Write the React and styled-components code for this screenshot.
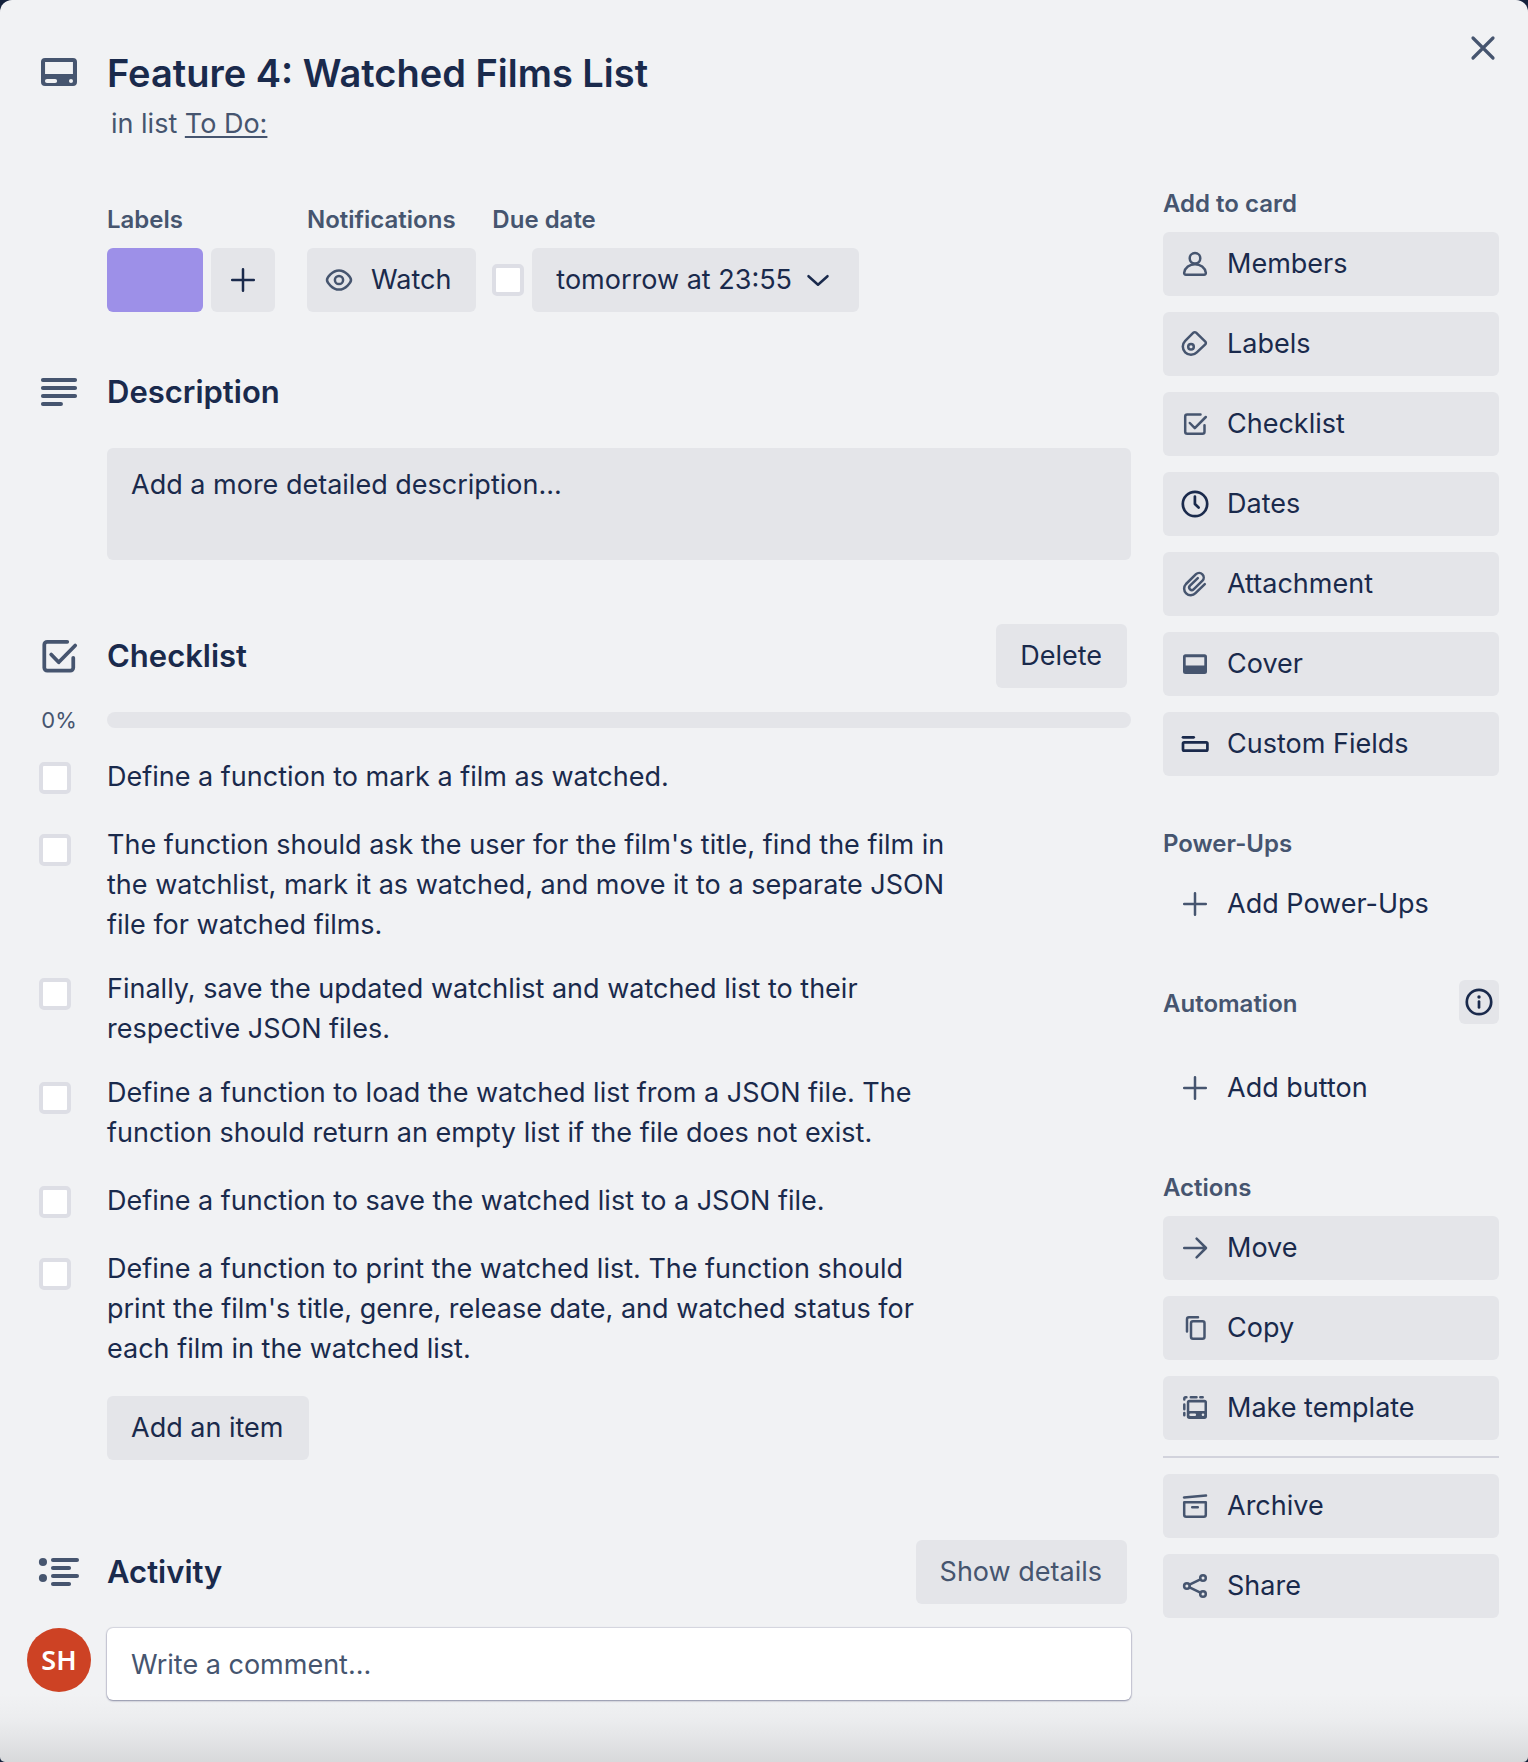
import React from "react";
import styled, { createGlobalStyle } from "styled-components";

const color = {
  text: "#1a2a4c",
  subtle: "#46556f",
  surface: "#f1f2f4",
  button: "#e4e5e9",
  line: "#d2d3dc",
  box: "#dddee5",
};

const GlobalStyle = createGlobalStyle`
  *, *::before, *::after { box-sizing: border-box; }
  body {
    margin: 0;
    background: #14213c;
    color: ${color.text};
    font: 400 27px/40px Inter, "Liberation Sans", sans-serif;
  }
  h1, h2, h3, p, ul { margin: 0; padding: 0; }
  button, input, textarea { font: inherit; color: inherit; }
`;

const Dialog = styled.main`
  min-height: 100vh;
  border-radius: 12px 12px 5px 5px;
  background: linear-gradient(to top, #d8d9db 0, #e3e4e6 22px, #ecedef 44px, ${color.surface} 68px);
`;

const Header = styled.header`
  display: flex;
  align-items: flex-start;
  padding: 28px 25px 0 27px;
`;

const Gutter = styled.div`
  display: flex;
  flex: none;
  justify-content: center;
  width: 64px;
  margin-right: 16px;
  color: ${color.subtle};
`;

const HeaderMain = styled.div`
  display: flex;
  flex: 1;
  padding-top: 20px;
`;

const Title = styled.h1`
  font-size: 38px;
  line-height: 50px;
  font-weight: 600;
`;

const Location = styled.p`
  padding: 6px 4px 0;
  color: ${color.subtle};
`;

const ListLink = styled.a`
  color: inherit;
  text-decoration: underline;
  text-decoration-thickness: 2px;
  text-underline-offset: 3px;
`;

const Close = styled.button`
  display: grid;
  place-items: center;
  width: 40px;
  height: 40px;
  padding: 0;
  border: 0;
  background: none;
  color: ${color.subtle};
  cursor: pointer;
`;

const Body = styled.div`
  display: grid;
  grid-template-columns: minmax(0, 1fr) 336px;
  gap: 32px;
  padding: 46px 29px 62px 27px;
`;

const Details = styled.div`
  display: flex;
  padding: 16px 0 0 80px;
`;

const Detail = styled.div`
  margin-right: ${(p) => p.$gap || 0}px;
`;

const SmallHeading = styled.h3`
  margin-bottom: 14px;
  color: ${color.subtle};
  font-size: 24px;
  line-height: 28px;
  font-weight: 600;
`;

const Row = styled.div`
  display: flex;
  align-items: center;
  gap: 8px;
`;

const Button = styled.button`
  display: flex;
  align-items: center;
  gap: ${(p) => p.$gap || 16}px;
  width: ${(p) => (p.$wide ? "100%" : "auto")};
  height: 64px;
  padding: 0 25px 0 ${(p) => (p.$icon ? 16 : 24)}px;
  border: 0;
  border-radius: 6px;
  background: ${(p) => (p.$plain ? "transparent" : color.button)};
  color: ${(p) => (p.$subtle ? color.subtle : color.text)};
  white-space: nowrap;
  cursor: pointer;
  svg { color: ${(p) => (p.$iconSubtle ? color.subtle : "inherit")}; }
`;

const Swatch = styled.button`
  width: 96px;
  height: 64px;
  border: 0;
  border-radius: 6px;
  background: #9d90e8;
  cursor: pointer;
`;

const Square = styled(Button)`
  justify-content: center;
  width: 64px;
  padding: 0;
`;

const Checkbox = styled.input`
  appearance: none;
  flex: none;
  width: 32px;
  height: 32px;
  margin: 0;
  border: 4px solid ${color.box};
  border-radius: 5px;
  background: #fff;
  &:checked { background: #0c66e4; }
`;

const SectionHead = styled.div`
  display: flex;
  align-items: center;
  height: 64px;
  margin-top: ${(p) => p.$top}px;
  padding-right: 4px;
`;

const SectionTitle = styled.h2`
  flex: 1;
  font-size: 31px;
  line-height: 40px;
  font-weight: 600;
`;

const Description = styled.textarea`
  display: block;
  width: calc(100% - 80px);
  height: 112px;
  margin: 24px 0 0 80px;
  padding: 17px 24px;
  border: 0;
  border-radius: 6px;
  background: ${color.button};
  resize: none;
  &::placeholder { color: ${color.text}; opacity: 1; }
`;

const Progress = styled.div`
  display: flex;
  align-items: center;
  height: 32px;
  margin: 16px 0 4px;
`;

const Percent = styled.span`
  font-size: 22px;
  line-height: 32px;
`;

const Track = styled.div`
  flex: 1;
  height: 16px;
  border-radius: 8px;
  background: ${color.button};
`;

const Items = styled.ul`
  list-style: none;
`;

const Item = styled.li`
  display: flex;
  min-height: 72px;
  padding: 0 176px 0 12px;
  ${Checkbox} { margin: 22px 36px 0 0; }
`;

const ItemText = styled.label`
  align-self: center;
  padding: 13px 0 11px;
`;

const AddItem = styled(Button)`
  margin: 16px 0 0 80px;
`;

const CommentRow = styled.form`
  display: flex;
  align-items: flex-start;
  margin-top: 24px;
`;

const Avatar = styled.div`
  flex: none;
  width: 64px;
  height: 64px;
  margin-right: 16px;
  border-radius: 50%;
  background: #cd4224;
  color: #fff;
  font: 600 27px/64px "Noto Sans", sans-serif;
  text-align: center;
`;

const Comment = styled.input`
  flex: 1;
  min-width: 0;
  height: 72px;
  padding: 0 24px;
  border: 0;
  border-radius: 6px;
  background: #fff;
  box-shadow: 0 1px 2px rgba(30, 34, 80, 0.4), 0 0 1px 1px rgba(30, 34, 80, 0.12);
  &::placeholder { color: ${color.subtle}; opacity: 1; }
`;

const Sidebar = styled.aside`
  display: flex;
  flex-direction: column;
`;

const Group = styled.section`
  margin-top: ${(p) => p.$top || 0}px;
`;

const Stack = styled.div`
  display: flex;
  flex-direction: column;
  gap: 16px;
`;

const AutomationHead = styled.div`
  display: flex;
  align-items: flex-start;
  justify-content: space-between;
  height: 44px;
  margin-bottom: 32px;
  ${SmallHeading} { padding-top: 10px; }
`;

const InfoButton = styled(Button)`
  justify-content: center;
  width: 40px;
  height: 44px;
  padding: 0;
`;

const Divider = styled.hr`
  width: 100%;
  height: 2px;
  margin: 0;
  border: 0;
  background: ${color.line};
`;

const Svg = styled.svg`
  flex: none;
  width: ${(p) => p.$size}px;
  height: ${(p) => p.$size}px;
  fill: none;
  stroke: currentColor;
  stroke-width: 2.5;
  stroke-linecap: round;
  stroke-linejoin: round;
`;

const solid = { fill: "currentColor", stroke: "none", fillRule: "evenodd" };

const shapes = {
  card: (
    <path {...solid} d="M6.7 6.7h18.6A2.7 2.7 0 0 1 28 9.4v13.2a2.7 2.7 0 0 1-2.7 2.7H6.7A2.7 2.7 0 0 1 4 22.6V9.4a2.7 2.7 0 0 1 2.7-2.7zM6.7 9.4v8h18.6v-8zM8 20.6a1.3 1.3 0 0 0 0 2.7h5.4a1.3 1.3 0 0 0 0-2.7zM24 20.6a1.3 1.3 0 1 0 0 2.7 1.3 1.3 0 0 0 0-2.7z" />
  ),
  close: <path strokeWidth="3.2" d="M6 6l20 20M26 6L6 26" />,
  plus: <path d="M16 5.2v21.6M5.2 16h21.6" />,
  eye: (
    <>
      <path d="M4 16c0-2 5-9.600 12-9.600S28 14 28 16s-5 9.600-12 9.600S4 18 4 16z" />
      <circle cx="16" cy="16" r="4.1" />
    </>
  ),
  chevron: <path strokeWidth="2.5" d="M6.500 12.200L16 20.700 25.500 12.200" />,
  lines: <path strokeWidth="2.7" d="M5.300 8h21.400M5.300 13.300h21.400M5.300 18.700h21.400M5.300 24h12" />,
  checklist: (
    <path d="M21.500 6.500H8.200a2 2 0 0 0-2 2v15.300a2 2 0 0 0 2 2h15.300a2 2 0 0 0 2-2V17.200M10.800 15l5 5.200L26.800 9" />
  ),
  activity: (
    <>
      <path strokeWidth="2.7" d="M12 8h16M12 13.300h10.700M12 18.700h16M12 24h10.700" />
      <circle {...solid} cx="5.300" cy="9.300" r="2.700" />
      <circle {...solid} cx="5.300" cy="20" r="2.700" />
    </>
  ),
  member: (
    <>
      <circle cx="16" cy="10.300" r="5.300" />
      <path d="M7 26.800h18a1.800 1.800 0 0 0 1.800-2.200C26 19.800 21.500 16.200 16 16.200S6 19.800 5.200 24.600A1.800 1.800 0 0 0 7 26.800z" />
    </>
  ),
  label: (
    <>
      <path d="M6.200 12.800L14.400 4.700a1.900 1.900 0 0 1 2.700 0L26.300 13.600a1.900 1.900 0 0 1 0 2.700L17.800 24.400A8.200 8.200 0 0 1 6.200 12.800z" />
      <circle cx="12" cy="18.700" r="2.800" />
    </>
  ),
  clock: (
    <>
      <circle cx="16" cy="16" r="12.200" strokeWidth="2.700" />
      <path strokeWidth="2.700" d="M15.900 8.500V16l3.700 3.500" />
    </>
  ),
  clip: (
    <path d="M25.800 16.200l-9.300 9A6.600 6.600 0 0 1 7 16L17 6.200a4.600 4.600 0 0 1 6.500 6.500L14.600 21.300a2.500 2.500 0 0 1-3.600-3.600L18.800 10.200" />
  ),
  cover: (
    <path {...solid} d="M6.500 6.300h19A2.500 2.500 0 0 1 28 8.800v14.700a2.500 2.500 0 0 1-2.500 2.500h-19A2.500 2.500 0 0 1 4 23.500V8.800a2.500 2.500 0 0 1 2.500-2.500zM6.700 9.300v8.200h18.600V9.300z" />
  ),
  fields: (
    <>
      <path strokeWidth="2.700" d="M4 9.300h10.700" />
      <rect strokeWidth="2.700" x="4" y="14.400" width="24.400" height="8.300" rx="1.200" />
    </>
  ),
  info: (
    <>
      <circle cx="16" cy="16" r="12.200" strokeWidth="2.700" />
      <circle {...solid} cx="16" cy="11" r="1.700" />
      <path strokeWidth="2.700" d="M16 15.500v6" />
    </>
  ),
  arrow: <path d="M5.200 16h21.400M17.600 6.600L27 16l-9.400 9.400" />,
  copy: (
    <>
      <path d="M19 5.200H10a2 2 0 0 0-2 2V19.500" />
      <rect x="12" y="9.300" width="13.500" height="17.400" rx="2" />
    </>
  ),
  template: (
    <>
      <path d="M5.300 7.400V6.700a1.400 1.400 0 0 1 1.400-1.400h.7M11.800 5.300h5.700M21.300 5.300h2.400M5.300 12.500v4.700M5.300 21v2.200" />
      <path {...solid} d="M10.400 7.700h15A2.600 2.600 0 0 1 28 10.300v14a2.600 2.600 0 0 1-2.600 2.600h-15a2.600 2.600 0 0 1-2.600-2.600v-14a2.600 2.600 0 0 1 2.600-2.600zM10.300 10.400v8.600h15.200v-8.600zM11.600 21.500a1.300 1.300 0 0 0 0 2.600h4.200a1.300 1.300 0 0 0 0-2.600zM24 21.500a1.300 1.300 0 1 0 0 2.600 1.300 1.300 0 0 0 0-2.600z" />
    </>
  ),
  archive: (
    <path d="M5 7.400L27 5.500M5.200 12.300h21.600v12.500a2 2 0 0 1-2 2H7.200a2 2 0 0 1-2-2zM13.200 17.300h5.600" />
  ),
  share: (
    <>
      <circle cx="7.900" cy="16" r="2.800" />
      <circle cx="24" cy="8" r="2.800" />
      <circle cx="24" cy="24" r="2.800" />
      <path d="M10.500 14.700l10.900-5.400M10.500 17.300l10.900 5.400" />
    </>
  ),
};

const Icon = ({ name, size = 32 }) => (
  <Svg viewBox="0 0 32 32" $size={size} aria-hidden="true">
    {shapes[name]}
  </Svg>
);

const items = [
  "Define a function to mark a film as watched.",
  "The function should ask the user for the film's title, find the film in the watchlist, mark it as watched, and move it to a separate JSON file for watched films.",
  "Finally, save the updated watchlist and watched list to their respective JSON files.",
  "Define a function to load the watched list from a JSON file. The function should return an empty list if the file does not exist.",
  "Define a function to save the watched list to a JSON file.",
  "Define a function to print the watched list. The function should print the film's title, genre, release date, and watched status for each film in the watched list.",
];

const addActions = [
  ["member", "Members"],
  ["label", "Labels"],
  ["checklist", "Checklist"],
  ["clock", "Dates", true],
  ["clip", "Attachment"],
  ["cover", "Cover"],
  ["fields", "Custom Fields", true],
];

const cardActions = [
  ["arrow", "Move"],
  ["copy", "Copy"],
  ["template", "Make template"],
];

const endActions = [
  ["archive", "Archive"],
  ["share", "Share"],
];

const SideButton = ({ icon, label, dark, plain }) => (
  <Button type="button" $wide $icon $iconSubtle={!dark} $plain={plain}>
    <Icon name={icon} />
    {label}
  </Button>
);

export default function App() {
  return (
    <>
      <GlobalStyle />
      <Dialog>
        <Header>
          <HeaderMain>
            <Gutter>
              <Icon name="card" size={48} />
            </Gutter>
            <div>
              <Title>Feature 4: Watched Films List</Title>
              <Location>
                in list <ListLink href="#list">To Do:</ListLink>
              </Location>
            </div>
          </HeaderMain>
          <Close type="button" aria-label="Close">
            <Icon name="close" />
          </Close>
        </Header>

        <Body>
          <div>
            <Details>
              <Detail $gap={32}>
                <SmallHeading>Labels</SmallHeading>
                <Row>
                  <Swatch type="button" aria-label="Purple label" />
                  <Square type="button" aria-label="Add label">
                    <Icon name="plus" />
                  </Square>
                </Row>
              </Detail>
              <Detail $gap={16}>
                <SmallHeading>Notifications</SmallHeading>
                <Button type="button" $icon $iconSubtle>
                  <Icon name="eye" />
                  Watch
                </Button>
              </Detail>
              <Detail>
                <SmallHeading>Due date</SmallHeading>
                <Row>
                  <Checkbox type="checkbox" aria-label="Mark due date complete" />
                  <Button type="button" $gap={10}>
                    tomorrow at 23:55
                    <Icon name="chevron" />
                  </Button>
                </Row>
              </Detail>
            </Details>

            <SectionHead $top={48}>
              <Gutter>
                <Icon name="lines" size={48} />
              </Gutter>
              <SectionTitle>Description</SectionTitle>
            </SectionHead>
            <Description aria-label="Description" placeholder="Add a more detailed description..." />

            <SectionHead $top={64}>
              <Gutter>
                <Icon name="checklist" size={48} />
              </Gutter>
              <SectionTitle>Checklist</SectionTitle>
              <Button type="button">Delete</Button>
            </SectionHead>
            <Progress>
              <Gutter>
                <Percent>0%</Percent>
              </Gutter>
              <Track role="progressbar" aria-label="Checklist progress" aria-valuenow={0} />
            </Progress>
            <Items>
              {items.map((text, i) => (
                <Item key={text}>
                  <Checkbox type="checkbox" id={`item-${i}`} />
                  <ItemText htmlFor={`item-${i}`}>{text}</ItemText>
                </Item>
              ))}
            </Items>
            <AddItem type="button">Add an item</AddItem>

            <SectionHead $top={80}>
              <Gutter>
                <Icon name="activity" size={48} />
              </Gutter>
              <SectionTitle>Activity</SectionTitle>
              <Button type="button" $subtle>
                Show details
              </Button>
            </SectionHead>
            <CommentRow>
              <Avatar>SH</Avatar>
              <Comment type="text" aria-label="Comment" placeholder="Write a comment..." />
            </CommentRow>
          </div>

          <Sidebar>
            <Group>
              <SmallHeading>Add to card</SmallHeading>
              <Stack>
                {addActions.map(([icon, label, dark]) => (
                  <SideButton key={label} icon={icon} label={label} dark={dark} />
                ))}
              </Stack>
            </Group>
            <Group $top={54}>
              <SmallHeading>Power-Ups</SmallHeading>
              <SideButton icon="plus" label="Add Power-Ups" plain />
            </Group>
            <Group $top={44}>
              <AutomationHead>
                <SmallHeading>Automation</SmallHeading>
                <InfoButton type="button" aria-label="About automation">
                  <Icon name="info" />
                </InfoButton>
              </AutomationHead>
              <SideButton icon="plus" label="Add button" plain />
            </Group>
            <Group $top={54}>
              <SmallHeading>Actions</SmallHeading>
              <Stack>
                {cardActions.map(([icon, label]) => (
                  <SideButton key={label} icon={icon} label={label} />
                ))}
                <Divider />
                {endActions.map(([icon, label]) => (
                  <SideButton key={label} icon={icon} label={label} />
                ))}
              </Stack>
            </Group>
          </Sidebar>
        </Body>
      </Dialog>
    </>
  );
}
